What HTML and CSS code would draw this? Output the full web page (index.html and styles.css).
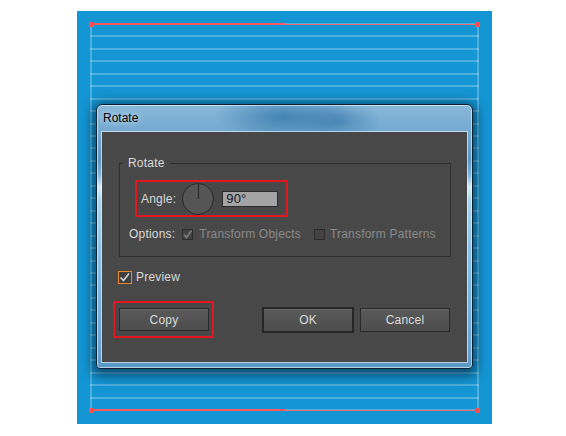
FILE: index.html
```html
<!DOCTYPE html>
<html lang="en">
  <head>
    <meta charset="UTF-8" />
    <title>Rotate</title>
    <link rel="stylesheet" href="styles.css">
  </head>
  <body>
    <div class="artboard">
      <!-- guides drawn on the artboard -->
      <div class="guides"></div>
      <div class="red-line top"><span class="thick"></span></div>
      <div class="red-line bottom"><span class="thick"></span></div>
      <span class="marker tl"></span>
      <span class="marker tr"></span>
      <span class="marker bl"></span>
      <span class="marker br"></span>

      <div class="dialog">
        <div class="titlebar">Rotate</div>
        <div class="panel">
          <div class="group">
            <span class="group-title">Rotate</span>
            <div class="angle-box highlight">
              <span>Angle:</span>
              <div class="dial"><span class="needle"></span></div>
              <div class="field">90°</div>
            </div>
            <div class="options-row">
              <span>Options:</span>
              <span class="check disabled check-objects">
                <svg width="11" height="11" viewBox="0 0 11 11"><polyline points="2,5.5 4.5,8.5 9.5,1.5" fill="none" stroke="#7c7c7c" stroke-width="1.7"/></svg>
              </span>
              <span class="dim">Transform Objects</span>
              <span class="check disabled check-patterns"></span>
              <span class="dim">Transform Patterns</span>
            </div>
          </div>

          <div class="preview-row">
            <span class="check preview">
              <svg width="13" height="13" viewBox="0 0 13 13"><polyline points="2.5,6.5 5.5,9.5 11,2.5" fill="none" stroke="#d0d0d0" stroke-width="1.7"/></svg>
            </span>
            <span>Preview</span>
          </div>

          <div class="button-row">
            <div class="copy-box highlight"><button class="btn copy">Copy</button></div>
            <button class="btn ok">OK</button>
            <button class="btn cancel">Cancel</button>
          </div>
        </div>
      </div>
    </div>
  </body>
</html>
```

FILE: styles.css
```css
body {
  margin: 0;
  background: #fff;
  font-family: "Liberation Sans", Arial, sans-serif;
}
.artboard {
  position: relative;
  margin: 11px 0 0 77px;
  width: 415px;
  height: 413px;
  background: #1496d4;
  overflow: hidden;
}
.guides {
  position: absolute;
  left: 13px;
  top: 12px;
  width: 389px;
  height: 389px;
  box-sizing: border-box;
  border-left: 2px solid rgba(255, 255, 255, 0.24);
  border-right: 2px solid rgba(255, 255, 255, 0.24);
  background: repeating-linear-gradient(to bottom, rgba(255, 255, 255, 0.24) 0 2px, transparent 2px 12.45px);
}
.red-line {
  position: absolute;
  left: 14px;
  width: 387px;
  height: 1px;
  background: #f06a72;
}
.red-line.top {
  top: 13px;
}
.red-line.bottom {
  top: 399px;
}
.red-line .thick {
  display: block;
  width: 194px;
  height: 2px;
  margin-top: -1px;
  background: #ff5a5f;
}
.marker {
  position: absolute;
  width: 5px;
  height: 5px;
  background: #ff4d52;
}
.marker.tl { left: 12px; top: 11px; }
.marker.tr { left: 398px; top: 11px; }
.marker.bl { left: 12px; top: 397px; }
.marker.br { left: 398px; top: 397px; }

/* dialog window */
.dialog {
  position: absolute;
  left: 19px;
  top: 93px;
  width: 377px;
  height: 265px;
  box-sizing: border-box;
  display: flex;
  flex-direction: column;
  padding: 0 5px 6px;
  border: 1px solid #0d2233;
  border-radius: 6px 6px 4px 4px;
  background:
    radial-gradient(ellipse 70px 24px at 50% 12px, rgba(40, 110, 165, 0.7), transparent),
    radial-gradient(ellipse 45px 20px at 64% 16px, rgba(40, 110, 165, 0.55), transparent),
    linear-gradient(to bottom, #8ab8d8 0, #74a9d0 27px, #5b97c5 55px, #7fb4da 70px, #d9edf8 82px, #a8d2ec 96px, #86c0e4 150px, #6aa8d6 230px, #5b98c6 100%);
  box-shadow: inset 0 0 0 1px rgba(255, 255, 255, 0.55), 0 3px 12px 4px rgba(0, 25, 45, 0.6);
}
.titlebar {
  height: 27px;
  line-height: 27px;
  padding-left: 1px;
  font-size: 12px;
  color: #000;
  text-shadow: 0 0 6px rgba(255, 255, 255, 0.9);
}
.panel {
  flex: 1;
  background: #484848;
  box-shadow: 0 0 0 1px rgba(255, 255, 255, 0.55);
  font-size: 12px;
  letter-spacing: 0.2px;
  color: #dadada;
}
.group {
  position: relative;
  width: 332px;
  height: 94px;
  box-sizing: border-box;
  margin: 31px 0 0 17px;
  padding: 16px 0 0 9px;
  border: 1px solid #2e2e2e;
}
.group-title {
  position: absolute;
  left: 3px;
  top: -8px;
  padding: 0 5px;
  line-height: 14px;
  background: #484848;
}
.highlight {
  border: 2px solid #e2161e;
  box-sizing: border-box;
}
.angle-box {
  display: flex;
  align-items: center;
  width: 153px;
  height: 37px;
  margin-left: 6px;
  padding-left: 4px;
}
.dial {
  position: relative;
  width: 32px;
  height: 32px;
  box-sizing: border-box;
  margin-left: 6px;
  border: 1px solid #2a2a2a;
  border-radius: 50%;
  background: #555;
}
.needle {
  position: absolute;
  left: 15px;
  top: 0;
  width: 1px;
  height: 15px;
  background: #222;
}
.field {
  width: 56px;
  height: 16px;
  box-sizing: border-box;
  margin-left: 8px;
  padding-left: 3px;
  border: 1px solid #2a2a2a;
  background: #a4a4a4;
  color: #15152a;
  font-size: 13px;
  line-height: 14px;
}
.options-row {
  display: flex;
  align-items: center;
  height: 14px;
  margin-top: 10px;
}
.check {
  display: inline-block;
  box-sizing: border-box;
  border: 1px solid #2c2c2c;
  background: #424242;
}
.check svg {
  display: block;
  margin: -1px;
}
.check.disabled {
  width: 11px;
  height: 11px;
}
.check-objects {
  margin: 0 6px 0 7px;
}
.check-patterns {
  width: 12px;
  height: 12px;
  margin: 0 5px 0 13px;
}
.dim {
  color: #8a8a8a;
}
.preview-row {
  display: flex;
  align-items: center;
  margin: 13px 0 0 16px;
}
.check.preview {
  width: 14px;
  height: 13px;
  margin-right: 4px;
  border-color: #e8892a;
  background: #3e3e3e;
}
.button-row {
  display: flex;
  align-items: center;
  margin: 17px 17px 0 11px;
}
.copy-box {
  padding: 5px 3px 5px 4px;
}
.btn {
  height: 24px;
  width: 90px;
  box-sizing: border-box;
  border: 1px solid #282828;
  background: linear-gradient(to bottom, #5a5a5a, #4d4d4d);
  box-shadow: inset 0 1px 0 #666;
  color: #dadada;
  font-family: "Liberation Sans", Arial, sans-serif;
  font-size: 12px;
  letter-spacing: 0.2px;
  padding: 0;
}
.btn.copy {
  height: 23px;
  display: block;
}
.btn.ok {
  width: 92px;
  height: 26px;
  margin-left: auto;
  border: 2px solid #262626;
}
.btn.cancel {
  margin-left: 6px;
}
```
